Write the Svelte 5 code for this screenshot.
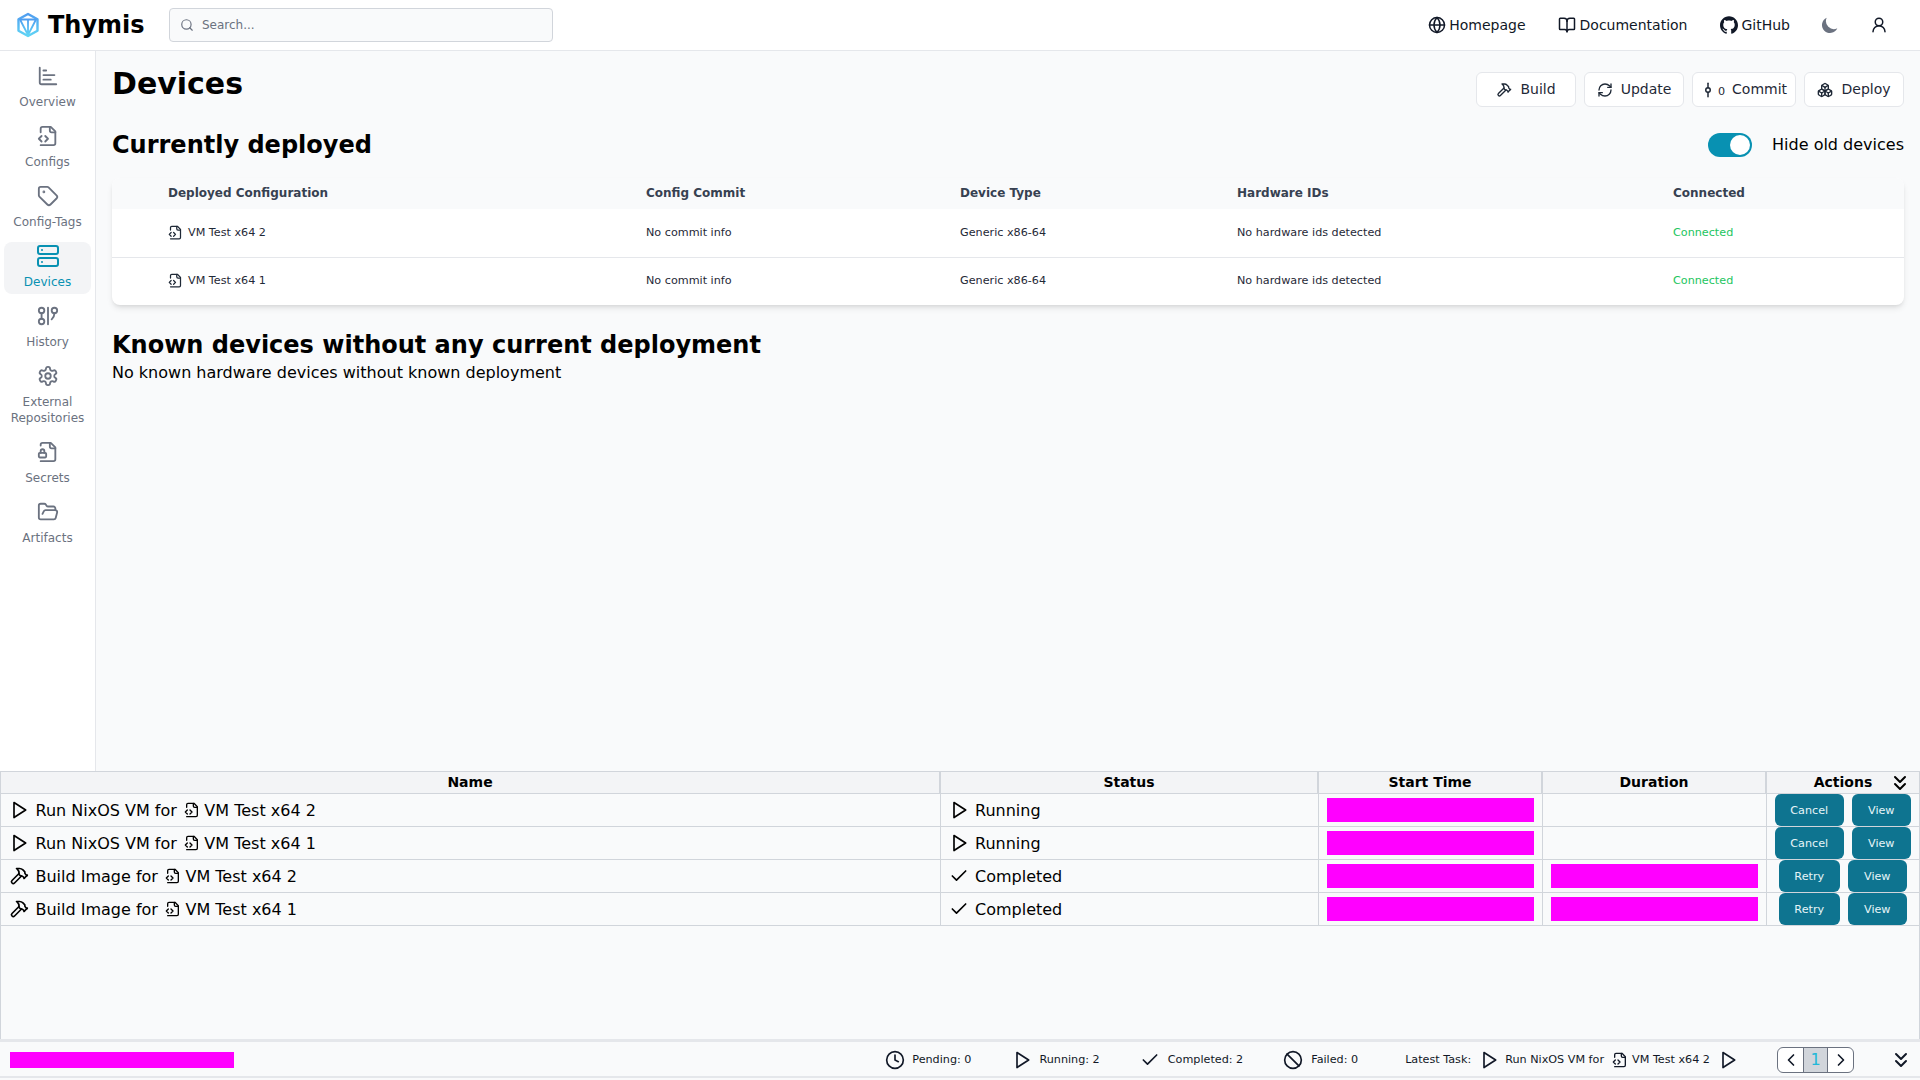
<script lang="ts">
  const icons: Record<string, string> = {
    chart: '<path d="M3 3v16a2 2 0 0 0 2 2h16"/><path d="M7 16h8"/><path d="M7 11h12"/><path d="M7 6h3"/>',
    fileCode: '<path d="M4 22h14a2 2 0 0 0 2-2V7l-5-5H6a2 2 0 0 0-2 2v4"/><path d="M14 2v4a2 2 0 0 0 2 2h4"/><path d="m5 12-3 3 3 3"/><path d="m9 18 3-3-3-3"/>',
    tag: '<path d="M12.586 2.586A2 2 0 0 0 11.172 2H4a2 2 0 0 0-2 2v7.172a2 2 0 0 0 .586 1.414l8.704 8.704a2.426 2.426 0 0 0 3.42 0l6.58-6.58a2.426 2.426 0 0 0 0-3.42z"/><circle cx="7.5" cy="7.5" r=".5" fill="currentColor"/>',
    server: '<rect width="20" height="8" x="2" y="2" rx="2"/><rect width="20" height="8" x="2" y="14" rx="2"/><path d="M6 6h.01"/><path d="M6 18h.01"/>',
    graph: '<circle cx="5" cy="6" r="3"/><path d="M5 9v6"/><circle cx="5" cy="18" r="3"/><path d="M12 3v18"/><circle cx="19" cy="6" r="3"/><path d="M16 15.7A9 9 0 0 0 19 9"/>',
    settings: '<path d="M12.22 2h-.44a2 2 0 0 0-2 2v.18a2 2 0 0 1-1 1.73l-.43.25a2 2 0 0 1-2 0l-.15-.08a2 2 0 0 0-2.73.73l-.22.38a2 2 0 0 0 .73 2.73l.15.1a2 2 0 0 1 1 1.72v.51a2 2 0 0 1-1 1.74l-.15.09a2 2 0 0 0-.73 2.73l.22.38a2 2 0 0 0 2.73.73l.15-.08a2 2 0 0 1 2 0l.43.25a2 2 0 0 1 1 1.73V20a2 2 0 0 0 2 2h.44a2 2 0 0 0 2-2v-.18a2 2 0 0 1 1-1.73l.43-.25a2 2 0 0 1 2 0l.15.08a2 2 0 0 0 2.73-.73l.22-.39a2 2 0 0 0-.73-2.73l-.15-.08a2 2 0 0 1-1-1.74v-.5a2 2 0 0 1 1-1.74l.15-.09a2 2 0 0 0 .73-2.73l-.22-.38a2 2 0 0 0-2.73-.73l-.15.08a2 2 0 0 1-2 0l-.43-.25a2 2 0 0 1-1-1.73V4a2 2 0 0 0-2-2z"/><circle cx="12" cy="12" r="3"/>',
    fileLock: '<path d="M4 22h14a2 2 0 0 0 2-2V7l-5-5H6a2 2 0 0 0-2 2v1"/><path d="M14 2v4a2 2 0 0 0 2 2h4"/><rect width="8" height="5" x="2" y="13" rx="1"/><path d="M8 13v-2a2 2 0 1 0-4 0v2"/>',
    folder: '<path d="m6 14 1.5-2.9A2 2 0 0 1 9.24 10H20a2 2 0 0 1 1.94 2.5l-1.54 6a2 2 0 0 1-1.95 1.5H4a2 2 0 0 1-2-2V5a2 2 0 0 1 2-2h3.9a2 2 0 0 1 1.69.9l.81 1.2a2 2 0 0 0 1.67.9H18a2 2 0 0 1 2 2v2"/>',
    globe: '<circle cx="12" cy="12" r="10"/><path d="M12 2a14.5 14.5 0 0 0 0 20 14.5 14.5 0 0 0 0-20"/><path d="M2 12h20"/>',
    book: '<path d="M12 7v14"/><path d="M3 18a1 1 0 0 1-1-1V4a1 1 0 0 1 1-1h5a4 4 0 0 1 4 4 4 4 0 0 1 4-4h5a1 1 0 0 1 1 1v13a1 1 0 0 1-1 1h-6a3 3 0 0 0-3 3 3 3 0 0 0-3-3z"/>',
    user: '<circle cx="12" cy="8" r="5"/><path d="M20 21a8 8 0 0 0-16 0"/>',
    hammer: '<path d="m15 12-8.373 8.373a1 1 0 1 1-3-3L12 9"/><path d="m18 15 4-4"/><path d="m21.5 11.5-1.914-1.914A2 2 0 0 1 19 8.172V7l-2.26-2.26a6 6 0 0 0-4.202-1.756L9 2.96l.92.82A6.18 6.18 0 0 1 12 8.4V10l2 2h1.172a2 2 0 0 1 1.414.586L18.5 14.5"/>',
    refresh: '<path d="M3 12a9 9 0 0 1 9-9 9.75 9.75 0 0 1 6.74 2.74L21 8"/><path d="M21 3v5h-5"/><path d="M21 12a9 9 0 0 1-9 9 9.75 9.75 0 0 1-6.74-2.74L3 16"/><path d="M8 16H3v5"/>',
    commit: '<path d="M12 3v6"/><circle cx="12" cy="12" r="3"/><path d="M12 15v6"/>',
    boxes: '<path d="M2.97 12.92A2 2 0 0 0 2 14.63v3.24a2 2 0 0 0 .97 1.71l3 1.8a2 2 0 0 0 2.06 0L12 19v-5.5l-5-3-4.03 2.42Z"/><path d="m7 16.5-4.74-2.85"/><path d="m7 16.5 5-3"/><path d="M7 16.5v5.17"/><path d="M12 13.5V19l3.97 2.38a2 2 0 0 0 2.06 0l3-1.8a2 2 0 0 0 .97-1.71v-3.24a2 2 0 0 0-.97-1.71L17 10.5l-5 3Z"/><path d="m17 16.5-5-3"/><path d="m17 16.5 4.74-2.85"/><path d="M17 16.5v5.17"/><path d="M7.97 4.42A2 2 0 0 0 7 6.13v4.37l5 3 5-3V6.13a2 2 0 0 0-.97-1.71l-3-1.8a2 2 0 0 0-2.06 0l-3 1.8Z"/><path d="M12 8 7.26 5.15"/><path d="m12 8 4.74-2.85"/><path d="M12 13.5V8"/>',
    play: '<polygon points="6 3 20 12 6 21 6 3"/>',
    check: '<path d="M20 6 9 17l-5-5"/>',
    clock: '<circle cx="12" cy="12" r="10"/><polyline points="12 6 12 12 16 14"/>',
    ban: '<circle cx="12" cy="12" r="10"/><path d="m4.9 4.9 14.2 14.2"/>',
    chevronsDown: '<path d="m7 6 5 5 5-5"/><path d="m7 13 5 5 5-5"/>',
    left: '<path d="m15 18-6-6 6-6"/>',
    right: '<path d="m9 18 6-6-6-6"/>',
    search: '<circle cx="11" cy="11" r="8"/><path d="m21 21-4.3-4.3"/>',
  };

  const sidebar = [
    { label: 'Overview', icon: 'chart' },
    { label: 'Configs', icon: 'fileCode' },
    { label: 'Config-Tags', icon: 'tag' },
    { label: 'Devices', icon: 'server', active: true },
    { label: 'History', icon: 'graph' },
    { label: 'External Repositories', icon: 'settings' },
    { label: 'Secrets', icon: 'fileLock' },
    { label: 'Artifacts', icon: 'folder' },
  ];

  const actions = [
    { label: 'Build', icon: 'hammer', size: 16 },
    { label: 'Update', icon: 'refresh', size: 16 },
    { label: 'Commit', icon: 'commit', size: 18, count: 0 },
    { label: 'Deploy', icon: 'boxes', size: 16 },
  ];

  const devices = ['VM Test x64 2', 'VM Test x64 1'];

  const tasks = [
    { icon: 'play', title: 'Run NixOS VM for', config: 'VM Test x64 2', status: 'Running', statusIcon: 'play', action: 'Cancel', done: false },
    { icon: 'play', title: 'Run NixOS VM for', config: 'VM Test x64 1', status: 'Running', statusIcon: 'play', action: 'Cancel', done: false },
    { icon: 'hammer', title: 'Build Image for', config: 'VM Test x64 2', status: 'Completed', statusIcon: 'check', action: 'Retry', done: true },
    { icon: 'hammer', title: 'Build Image for', config: 'VM Test x64 1', status: 'Completed', statusIcon: 'check', action: 'Retry', done: true },
  ];

  const counts = [
    { label: 'Pending: 0', icon: 'clock' },
    { label: 'Running: 2', icon: 'play' },
    { label: 'Completed: 2', icon: 'check' },
    { label: 'Failed: 0', icon: 'ban' },
  ];
</script>

{#snippet icon(name: string, size: number)}
  <svg class="icon" width={size} height={size} viewBox="0 0 24 24" fill="none" stroke="currentColor" stroke-width="2" stroke-linecap="round" stroke-linejoin="round">
    {@html icons[name]}
  </svg>
{/snippet}

<div class="page">
  <header class="navbar">
    <div class="brand">
      <svg class="logo" width="24" height="26" viewBox="0 0 24 26" fill="none">
        <defs>
          <linearGradient id="logo-fill" x1="0" y1="0" x2="0" y2="1">
            <stop offset="0" stop-color="#4f9df0" />
            <stop offset="1" stop-color="#5fd4f5" />
          </linearGradient>
        </defs>
        <path d="M12 2 21.5 7.2V18.8L12 24 2.5 18.8V7.2Z" stroke="url(#logo-fill)" stroke-width="2.4" stroke-linejoin="round" />
        <path d="M4 7.5H20L12 23Z M12 7.5V22" stroke="url(#logo-fill)" stroke-width="1.8" stroke-linejoin="round" />
      </svg>
      <span class="brand-name">Thymis</span>
    </div>
    <div class="search">
      <span class="search-icon">{@render icon('search', 14)}</span>
      <span class="search-text">Search...</span>
    </div>
    <nav class="links">
      <span class="link homepage">{@render icon('globe', 18)}Homepage</span>
      <span class="link docs">{@render icon('book', 18)}Documentation</span>
      <span class="link github">
        <svg width="18" height="18" viewBox="0 0 24 24" fill="currentColor"><path d="M12 .297c-6.63 0-12 5.373-12 12 0 5.303 3.438 9.8 8.205 11.385.6.113.82-.258.82-.577 0-.285-.01-1.04-.015-2.04-3.338.724-4.042-1.61-4.042-1.61C4.422 18.07 3.633 17.7 3.633 17.7c-1.087-.744.084-.729.084-.729 1.205.084 1.838 1.236 1.838 1.236 1.07 1.835 2.809 1.305 3.495.998.108-.776.417-1.305.76-1.605-2.665-.3-5.466-1.332-5.466-5.93 0-1.31.465-2.38 1.235-3.22-.135-.303-.54-1.523.105-3.176 0 0 1.005-.322 3.3 1.23.96-.267 1.98-.399 3-.405 1.02.006 2.04.138 3 .405 2.28-1.552 3.285-1.23 3.285-1.23.645 1.653.24 2.873.12 3.176.765.84 1.23 1.91 1.23 3.22 0 4.61-2.805 5.625-5.475 5.92.42.36.81 1.096.81 2.22 0 1.606-.015 2.896-.015 3.286 0 .315.21.69.825.57C20.565 22.092 24 17.592 24 12.297c0-6.627-5.373-12-12-12"/></svg>
        GitHub
      </span>
      <svg class="moon" width="20" height="20" viewBox="0 0 20 20" fill="currentColor"><path d="M17.293 13.293A8 8 0 016.707 2.707a8.001 8.001 0 1010.586 10.586z"/></svg>
      <span class="user">{@render icon('user', 18)}</span>
    </nav>
  </header>

  <div class="body">
    <aside class="sidebar">
      {#each sidebar as item}
        <div class="side-item" class:active={item.active}>
          {@render icon(item.icon, item.active ? 24 : 22)}
          <span>{item.label}</span>
        </div>
      {/each}
    </aside>

    <main class="content">
      <div class="title-row">
        <h1>Devices</h1>
        <div class="actions">
          {#each actions as a}
            <button class="action-btn">
              {@render icon(a.icon, a.size)}
              {#if a.count !== undefined}<small>{a.count}</small>{/if}
              <span>{a.label}</span>
            </button>
          {/each}
        </div>
      </div>

      <div class="section-row">
        <h2>Currently deployed</h2>
        <div class="toggle-wrap">
          <span class="toggle"><span class="knob"></span></span>
          <span class="toggle-label">Hide old devices</span>
        </div>
      </div>

      <div class="card">
        <table class="device-table">
          <colgroup>
            <col style="width: 56px" /><col style="width: 478px" /><col style="width: 314px" /><col style="width: 277px" /><col style="width: 436px" /><col />
          </colgroup>
          <thead>
            <tr>
              <th></th>
              <th>Deployed Configuration</th>
              <th>Config Commit</th>
              <th>Device Type</th>
              <th>Hardware IDs</th>
              <th>Connected</th>
            </tr>
          </thead>
          <tbody>
            {#each devices as d}
              <tr>
                <td></td>
                <td><span class="config-name">{@render icon('fileCode', 15)}{d}</span></td>
                <td>No commit info</td>
                <td>Generic x86-64</td>
                <td>No hardware ids detected</td>
                <td class="connected">Connected</td>
              </tr>
            {/each}
          </tbody>
        </table>
      </div>

      <h2 class="known">Known devices without any current deployment</h2>
      <p class="none">No known hardware devices without known deployment</p>
    </main>
  </div>

  <section class="tasks">
    <div class="task-scroll">
      <table class="task-table">
        <colgroup>
          <col style="width: 939px" /><col style="width: 378px" /><col style="width: 224px" /><col style="width: 224px" /><col />
        </colgroup>
        <thead>
          <tr>
            <th>Name</th>
            <th>Status</th>
            <th>Start Time</th>
            <th>Duration</th>
            <th class="actions-head">
              Actions
              <span class="collapse">{@render icon('chevronsDown', 24)}</span>
            </th>
          </tr>
        </thead>
        <tbody>
          {#each tasks as t}
            <tr>
              <td>
                <span class="cell">
                  {@render icon(t.icon, 20)}
                  <span class="task-title">{t.title}</span>
                  <span class="task-config">{@render icon('fileCode', 16)}{t.config}</span>
                </span>
              </td>
              <td><span class="cell">{@render icon(t.statusIcon, 20)}<span class="task-title">{t.status}</span></span></td>
              <td><div class="redact"></div></td>
              <td>{#if t.done}<div class="redact"></div>{/if}</td>
              <td>
                <div class="row-actions">
                  <button class="task-btn" class:wide={!t.done}>{t.action}</button>
                  <button class="task-btn view">View</button>
                </div>
              </td>
            </tr>
          {/each}
        </tbody>
      </table>
    </div>

    <footer class="statusbar">
      <div class="redact-bar"></div>
      <div class="counts">
        {#each counts as c}
          <span class="count">{@render icon(c.icon, 20)}<span>{c.label}</span></span>
        {/each}
      </div>
      <div class="latest">
        <span>Latest Task:</span>
        {@render icon('play', 20)}
        <span class="latest-title">Run NixOS VM for</span>
        <span class="latest-config">{@render icon('fileCode', 16)}VM Test x64 2</span>
        {@render icon('play', 20)}
      </div>
      <div class="pager">
        <span class="page-btn">{@render icon('left', 20)}</span>
        <span class="page-btn current">1</span>
        <span class="page-btn">{@render icon('right', 20)}</span>
      </div>
      <span class="collapse-bottom">{@render icon('chevronsDown', 24)}</span>
    </footer>
  </section>
</div>

<style>
  :global(body) {
    margin: 0;
    background: #fff;
    font-family: "DejaVu Sans", sans-serif;
    color: #000;
  }

  .page {
    display: flex;
    flex-direction: column;
    height: 1080px;
    overflow: hidden;
  }

  .icon {
    flex-shrink: 0;
    display: block;
  }

  /* navbar */
  .navbar {
    display: flex;
    align-items: center;
    height: 50px;
    flex-shrink: 0;
    padding: 0 16px;
    background: #fff;
    border-bottom: 1px solid #e5e7eb;
  }

  .brand {
    display: flex;
    align-items: center;
    gap: 8px;
    width: 153px;
  }

  .brand-name {
    font-size: 24px;
    font-weight: 700;
    line-height: 32px;
  }

  .search {
    display: flex;
    align-items: center;
    width: 384px;
    height: 34px;
    box-sizing: border-box;
    padding-left: 10px;
    background: #f9fafb;
    border: 1px solid #d1d5db;
    border-radius: 4px;
  }

  .search-icon {
    color: #6b7280;
    width: 22px;
  }

  .search-text {
    font-size: 12px;
    color: #6b7280;
  }

  .links {
    display: flex;
    align-items: center;
    margin-left: auto;
    font-size: 14px;
    color: #111827;
  }

  .link {
    display: flex;
    align-items: center;
    gap: 3px;
  }

  .docs {
    margin-left: 32px;
    gap: 4px;
  }

  .github {
    margin-left: 33px;
  }

  .moon {
    margin-left: 30px;
    color: #6b7280;
  }

  .user {
    margin-left: 30px;
    margin-right: 16px;
  }

  /* sidebar */
  .body {
    flex: 1;
    display: flex;
    min-height: 0;
  }

  .sidebar {
    flex-shrink: 0;
    padding: 11px 4px 0;
    width: 87px;
    display: flex;
    flex-direction: column;
    gap: 8px;
    background: #fff;
    border-right: 1px solid #e5e7eb;
  }

  .side-item {
    display: flex;
    flex-direction: column;
    align-items: center;
    padding: 2px 0 4px;
    gap: 6px;
    border-radius: 8px;
    font-size: 12px;
    line-height: 16px;
    color: #6b7280;
    text-align: center;
  }

  .side-item.active {
    background: #f3f4f6;
    color: #0891b2;
  }

  .side-item :global(svg) {
    margin: 1px 0;
  }

  .side-item.active :global(svg) {
    margin: 0;
  }

  /* main */
  .content {
    flex: 1;
    min-width: 0;
    padding: 0 16px;
    background: #f9fafb;
  }

  .title-row {
    display: flex;
    justify-content: space-between;
    align-items: flex-start;
    height: 85px;
  }

  h1 {
    margin: 15px 0 0;
    font-size: 30px;
    line-height: 36px;
    font-weight: 700;
  }

  .actions {
    display: flex;
    gap: 8px;
    margin-top: 21px;
  }

  .action-btn {
    display: flex;
    align-items: center;
    justify-content: center;
    gap: 8px;
    width: 100px;
    height: 35px;
    padding: 0;
    font: inherit;
    font-size: 14px;
    color: #1f2937;
    background: #fff;
    border: 1px solid #e5e7eb;
    border-radius: 6px;
  }

  .action-btn span {
    margin-top: -1px;
  }

  .action-btn:nth-child(3) {
    width: 104px;
    gap: 0;
    padding-right: 2px;
  }

  .action-btn small {
    font-size: 11.2px;
    margin: 4px 7px 0 1px;
  }

  .section-row {
    display: flex;
    justify-content: space-between;
    align-items: center;
    height: 32px;
    margin-bottom: 17px;
    margin-top: -7px;
  }

  h2 {
    margin: 0;
    font-size: 24px;
    line-height: 32px;
    font-weight: 700;
  }

  .toggle-wrap {
    display: flex;
    align-items: center;
    gap: 20px;
    font-size: 16px;
  }

  .toggle-label {
    margin-top: -1px;
  }

  .toggle {
    display: block;
    position: relative;
    width: 44px;
    height: 24px;
    border-radius: 12px;
    background: #0891b2;
  }

  .knob {
    position: absolute;
    top: 2px;
    right: 2px;
    width: 20px;
    height: 20px;
    border-radius: 50%;
    background: #fff;
  }

  .card {
    background: #fff;
    border-radius: 8px;
    box-shadow: 0 4px 6px -1px rgba(0, 0, 0, 0.1), 0 2px 4px -2px rgba(0, 0, 0, 0.1);
    overflow: hidden;
  }

  .device-table {
    width: 100%;
    table-layout: fixed;
    border-collapse: collapse;
    font-size: 11.2px;
    color: #1f2937;
    text-align: left;
  }

  .device-table th {
    height: 29px;
    padding: 0 0 2px;
    background: #f9fafb;
    font-size: 12px;
    font-weight: 700;
    color: #374151;
  }

  .device-table td {
    height: 46px;
    padding: 0 0 2px;
  }

  .device-table tbody tr + tr td {
    height: 45px;
    border-top: 1px solid #e5e7eb;
  }

  .config-name {
    display: flex;
    align-items: center;
    gap: 5px;
  }

  .connected {
    color: #22c55e;
  }

  .known {
    margin-top: 24px;
  }

  .none {
    margin: 0;
    font-size: 16px;
    line-height: 24px;
  }

  /* task panel */
  .tasks {
    height: 309px;
    flex-shrink: 0;
    display: flex;
    flex-direction: column;
    box-sizing: border-box;
    background: #f9fafb;
    padding-bottom: 2px;
    border-top: 1px solid #d1d5db;
  }

  .task-scroll {
    height: 267px;
    flex-shrink: 0;
    border-left: 1px solid #d1d5db;
    border-right: 1px solid #d1d5db;
    box-sizing: border-box;
  }

  .task-table {
    width: 100%;
    table-layout: fixed;
    border-collapse: collapse;
  }

  .task-table th {
    height: 21px;
    padding: 0;
    vertical-align: top;
    font-size: 14px;
    font-weight: 700;
    line-height: 20px;
    background: #f3f4f6;
    border-left: 2px solid #d1d5db;
    border-bottom: 1px solid #d1d5db;
  }

  .task-table th:first-child,
  .task-table td:first-child {
    border-left: none;
  }

  .task-table td {
    height: 32px;
    padding: 0;
    border-left: 1px solid #d1d5db;
    border-bottom: 1px solid #d1d5db;
    font-size: 16px;
  }

  .actions-head {
    position: relative;
  }

  .collapse {
    position: absolute;
    right: 7px;
    top: -1px;
  }

  .cell {
    display: flex;
    align-items: center;
    padding-left: 8px;
  }

  .task-title {
    margin-left: 6.5px;
  }

  .task-config {
    display: flex;
    align-items: center;
    gap: 4px;
    margin-left: 7.5px;
  }

  .redact {
    height: 24px;
    margin: 0 8px;
    background: #ff00ff;
  }

  .row-actions {
    display: flex;
    justify-content: center;
    gap: 8px;
  }

  .task-btn {
    height: 32px;
    width: 61px;
    padding: 0;
    font: inherit;
    font-size: 11.2px;
    color: #e6f4f8;
    background: #0e7490;
    border: none;
    border-radius: 6px;
  }

  .task-btn.wide {
    width: 69px;
  }

  .task-btn.view {
    width: 59px;
  }

  /* status bar */
  .statusbar {
    flex: 1;
    display: flex;
    align-items: center;
    padding: 1px 7px 0 10px;
    border-top: 3px solid #e5e7eb;
    border-bottom: 2px solid #e5e7eb;
    font-size: 11.2px;
    color: #111827;
  }

  .redact-bar {
    width: 224px;
    height: 16px;
    background: #ff00ff;
    margin-right: auto;
  }

  .counts {
    display: flex;
    align-items: center;
    gap: 40px;
  }

  .count {
    display: flex;
    align-items: center;
    gap: 8px;
  }

  .count:first-child {
    gap: 7px;
    margin-right: 1px;
  }

  .count:nth-child(2) {
    gap: 7px;
  }

  .latest {
    display: flex;
    align-items: center;
    gap: 8px;
    margin-left: 47px;
  }

  .latest-title {
    margin-left: -2px;
  }

  .latest-config {
    display: flex;
    align-items: center;
    gap: 4px;
  }

  .pager {
    display: flex;
    margin-left: 39px;
    height: 26px;
    box-sizing: border-box;
    border: 1px solid #6b7280;
    border-radius: 6px;
    overflow: hidden;
    background: #fff;
  }

  .page-btn {
    width: 25px;
    box-sizing: border-box;
    display: flex;
    align-items: center;
    justify-content: center;
  }

  .page-btn.current {
    background: #d1d5db;
    border-left: 1px solid #6b7280;
    border-right: 1px solid #6b7280;
    color: #22b8d8;
    font-size: 16px;
  }

  .collapse-bottom {
    margin-left: 35px;
  }
</style>
